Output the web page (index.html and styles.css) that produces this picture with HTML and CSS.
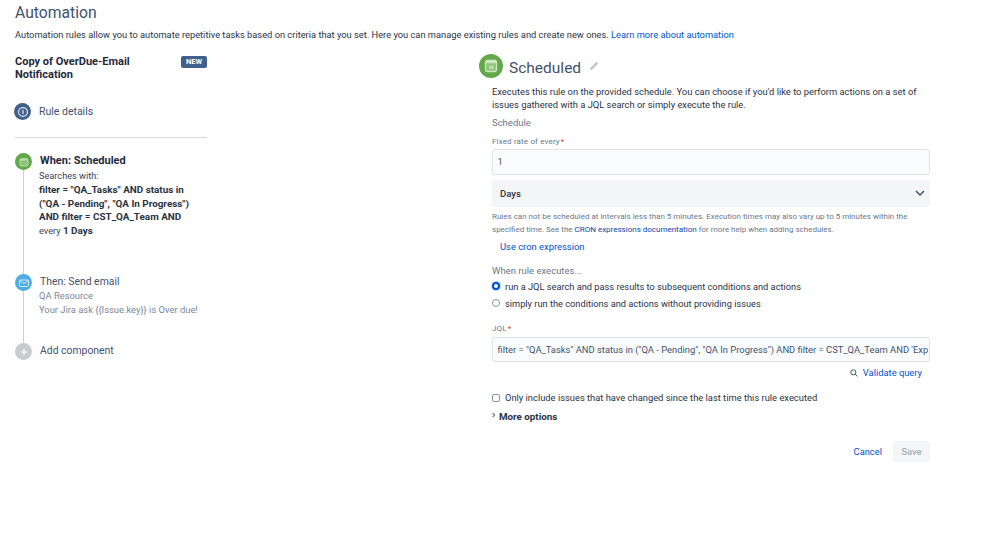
FILE: index.html
```html
<!DOCTYPE html>
<html lang="en">
<head>
<meta charset="utf-8">
<title>Automation</title>
<link rel="stylesheet" href="styles.css">
</head>
<body>
<main class="page">
  <h1 class="page-title">Automation</h1>
  <p class="page-desc">Automation rules allow you to automate repetitive tasks based on criteria that you set. Here you can manage existing rules and create new ones. <a href="#" class="link">Learn more about automation</a></p>
  <div class="columns">
    <aside class="rule">
      <div class="rule-head">
        <h2 class="rule-name">Copy of OverDue-Email Notification</h2>
        <span class="lozenge">NEW</span>
      </div>
      <div class="details">
        <span class="dot dot-navy">
          <svg viewBox="0 0 16 16" width="16" height="16"><circle cx="8" cy="8" r="4.400" fill="none" stroke="#dfe5ee" stroke-width="1.200"/><rect x="7.400" y="5.800" width="1.200" height="4.400" fill="#dfe5ee"/></svg>
        </span>
        <span class="details-label">Rule details</span>
      </div>
      <hr class="divider">
      <ol class="steps">
        <li class="step step-when">
          <span class="dot dot-green">
            <svg viewBox="0 0 16 16" width="16" height="16"><rect x="4" y="4.500" width="8" height="7.500" rx="1.500" fill="#8fc27a" stroke="#b9dbab" stroke-width="1"/><rect x="4.500" y="5" width="7" height="1.500" fill="#b9dbab"/></svg>
          </span>
          <div class="step-body">
            <h3 class="step-title strong">When: Scheduled</h3>
            <p class="step-text">Searches with:<br><b>filter = "QA_Tasks" AND status in<br>("QA - Pending", "QA In Progress")<br>AND filter = CST_QA_Team AND</b><br>every <b>1 Days</b></p>
          </div>
        </li>
        <li class="step step-then">
          <span class="dot dot-blue">
            <svg viewBox="0 0 16 16" width="16" height="16"><rect x="3.500" y="5" width="9" height="6.500" rx="1" fill="none" stroke="#d5ecfa" stroke-width="1"/><path d="M4 5.800 8 8.600l4-2.800" fill="none" stroke="#d5ecfa" stroke-width="1"/></svg>
          </span>
          <div class="step-body">
            <h3 class="step-title">Then: Send email</h3>
            <p class="step-text muted">QA Resource<br>Your Jira ask {{Issue.key}} is Over due!</p>
          </div>
        </li>
        <li class="step step-add">
          <span class="dot dot-grey">
            <svg viewBox="0 0 16 16" width="16" height="16"><path d="M8 5v6M5 8h6" stroke="#f4f5f7" stroke-width="1.600"/></svg>
          </span>
          <div class="step-body">
            <h3 class="step-title">Add component</h3>
          </div>
        </li>
      </ol>
    </aside>
    <section class="config">
      <header class="config-head">
        <span class="dot dot-green dot-large">
          <svg viewBox="0 0 24 24" width="24" height="24"><rect x="6.500" y="6.500" width="11" height="11" rx="2" fill="#8fc27a" stroke="#cfe6c4" stroke-width="1.300"/><rect x="7" y="7" width="10" height="2.200" fill="#cfe6c4"/><rect x="10" y="11.500" width="5" height="3.500" fill="#b9dbab"/></svg>
        </span>
        <h2 class="config-title">Scheduled</h2>
        <svg class="pencil" viewBox="0 0 12 12" width="10" height="10"><path d="M1 11l.7-3L8.300 1.400a1 1 0 0 1 1.400 0l.9.900a1 1 0 0 1 0 1.400L4 10.300z" fill="#c4c7cc"/></svg>
      </header>
      <form class="form">
        <p class="intro">Executes this rule on the provided schedule. You can choose if you'd like to perform actions on a set of issues gathered with a JQL search or simply execute the rule.</p>
        <div class="section-label">Schedule</div>
        <label class="field-label">Fixed rate of every<span class="req">*</span></label>
        <div class="input">1</div>
        <div class="select"><span>Days</span>
          <svg viewBox="0 0 12 12" width="12" height="12"><path d="M2 4l4 4 4-4" fill="none" stroke="#42526e" stroke-width="1.500"/></svg>
        </div>
        <p class="help">Rules can not be scheduled at intervals less than 5 minutes. Execution times may also vary up to 5 minutes within the specified time. See the <a href="#" class="link-dark">CRON expressions documentation</a> for more help when adding schedules.</p>
        <a href="#" class="cron">Use cron expression</a>
        <div class="section-label when">When rule executes...</div>
        <div class="radio-row"><span class="radio radio-on"></span>run a JQL search and pass results to subsequent conditions and actions</div>
        <div class="radio-row"><span class="radio"></span>simply run the conditions and actions without providing issues</div>
        <label class="field-label jql-label">JQL<span class="req">*</span></label>
        <div class="input input-jql"><span class="clip">filter = "QA_Tasks" AND status in ("QA - Pending", "QA In Progress") AND filter = CST_QA_Team AND 'Expected Date' &lt; now()</span></div>
        <div class="validate">
          <svg viewBox="0 0 12 12" width="8" height="8"><circle cx="5" cy="5" r="3.800" fill="none" stroke="#42526e" stroke-width="1.500"/><path d="M8 8l3.200 3.200" stroke="#42526e" stroke-width="1.500"/></svg>
          <a href="#" class="link">Validate query</a>
        </div>
        <div class="check-row"><span class="check"></span>Only include issues that have changed since the last time this rule executed</div>
        <div class="more">
          <svg viewBox="0 0 6 8" width="4" height="6"><path d="M1 1l3 3-3 3" fill="none" stroke="#172b4d" stroke-width="1.400"/></svg>
          <span>More options</span>
        </div>
        <div class="actions">
          <a href="#" class="link cancel">Cancel</a>
          <span class="save">Save</span>
        </div>
      </form>
    </section>
  </div>
</main>
</body>
</html>
```
FILE: styles.css
```css
* { box-sizing: border-box; }
html, body { margin: 0; padding: 0; }
body {
  width: 999px;
  height: 541px;
  overflow: hidden;
  background: #fff;
  color: #172b4d;
  font-family: Roboto, "Noto Sans", sans-serif;
}
a { text-decoration: none; }
h1, h2, h3, p { margin: 0; font-weight: 400; }
ol { list-style: none; margin: 0; padding: 0; }

.page { padding: 3px 0 0 15px; }
.page-title { font-size: 15.700px; line-height: 20px; color: #42526e; }
.page-desc { margin-top: 5px; font-size: 9.300px; line-height: 14px; color: #2a3344; white-space: nowrap; }
.link { color: #0052cc; }
.columns { display: flex; margin-top: 13px; }

.rule { width: 192px; flex: none; }
.rule-head { display: flex; justify-content: space-between; align-items: flex-start; height: 48px; }
.rule-name { width: 130px; font-size: 11px; line-height: 13px; font-weight: 700; color: #1f2a3d; }
.lozenge {
  margin-top: 1px;
  background: #42608c;
  color: #fff;
  font-size: 7.500px;
  font-weight: 700;
  line-height: 12px;
  height: 12px;
  width: 26px;
  text-align: center;
  border-radius: 2px;
}
.dot { display: flex; align-items: center; justify-content: center; width: 17px; height: 17px; border-radius: 50%; flex: none; position: relative; z-index: 1; }
.dot-navy { background: #42608c; }
.dot-green { background: #63a94a; }
.dot-blue { background: #4fade6; }
.dot-grey { background: #c9cbcf; }
.dot-large { width: 24px; height: 24px; }

.details { display: flex; align-items: center; gap: 8px; margin-left: -1px; }
.details-label { font-size: 10.500px; line-height: 17px; color: #42526e; }
.divider { border: 0; border-top: 1px solid #d5d7db; margin: 17px 0 15px; }

.step { display: flex; gap: 8px; position: relative; }
.step-when { height: 121px; }
.step-then { height: 69px; }
.step:not(.step-add)::before {
  content: "";
  position: absolute;
  left: 8px;
  top: 10px;
  bottom: -10px;
  width: 1px;
  background: #cfd1d5;
}
.step-title { font-size: 10.400px; line-height: 16px; color: #42526e; }
.step-title.strong { font-weight: 700; color: #1f2a3d; font-size: 11px; }
.step-text { margin: 0 0 0 -1px; font-size: 9.200px; line-height: 13.800px; color: #3a4456; }
.step-text b { font-size: 9.900px; color: #2a3344; }
.step-text.muted { color: #7a869a; margin-top: -1px; font-size: 9.400px; }

.config { width: 451px; margin-left: 272px; flex: none; margin-top: -1px; }
.config-head { display: flex; align-items: center; height: 24px; }
.config-title { margin: 3px 0 0 6px; font-size: 15.500px; color: #42526e; line-height: 24px; }
.pencil { margin: -1px 0 0 8px; }
.form { margin-left: 13px; width: 438px; margin-top: 7px; font-size: 9.350px; color: #2a3344; }
.intro { font-size: 9.370px; line-height: 13.300px; color: #2a3344; }
.section-label { margin-top: 4px; font-size: 9.500px; line-height: 13px; color: #6b778c; }
.field-label { display: block; margin-top: 7px; font-size: 8px; letter-spacing: 0.150px; line-height: 12px; color: #6b778c; }
.req { color: #de350b; margin-left: 1px; }
.input {
  margin-top: 1px;
  height: 26px;
  border: 1px solid #dfe1e6;
  border-radius: 3px;
  background: #fafbfc;
  display: flex;
  align-items: center;
  padding: 0 4.500px;
  font-size: 9.500px;
  color: #42526e;
}
.select {
  margin-top: 5px;
  height: 27px;
  border-radius: 3px;
  background: #f4f5f7;
  display: flex;
  align-items: center;
  justify-content: space-between;
  padding: 0 4px 0 8px;
  font-size: 9.500px;
  font-weight: 500;
  color: #2a3344;
}
.help { margin-top: 3px; font-size: 8px; line-height: 13.500px; color: #6b778c; }
.link-dark { color: #0747a6; }
.cron { display: block; margin: 3px 0 0 8px; font-size: 9.400px; line-height: 13px; color: #0052cc; }
.section-label.when { margin-top: 11px; }
.radio-row { display: flex; align-items: center; gap: 5px; height: 17px; font-size: 9.250px; color: #2a3344; }
.section-label.when + .radio-row { margin-top: 1px; }
.radio { width: 8px; height: 8px; border-radius: 50%; border: 1px solid #8993a4; background: #fff; flex: none; }
.radio-on { border: 2.500px solid #0052cc; background: #fff; box-shadow: 0 0 0 1px #b3d4ff; }
.jql-label { margin-top: 11px; }
.input-jql { height: 25px; margin-top: 2px; padding-right: 1px; font-size: 9.400px; }
.clip { overflow: hidden; white-space: nowrap; display: block; width: 100%; }
.validate { display: flex; justify-content: flex-end; align-items: center; gap: 5px; margin-top: 4px; padding-right: 8px; line-height: 14px; }
.check-row { display: flex; align-items: center; gap: 5px; margin-top: 11.500px; line-height: 13px; color: #2a3344; }
.check { width: 8px; height: 8px; border: 1px solid #8993a4; border-radius: 2px; flex: none; }
.more { display: flex; align-items: center; gap: 3px; margin-top: 6px; font-size: 9.800px; font-weight: 700; color: #2a3344; line-height: 13px; }
.more svg { margin-top: -3px; }
.actions { display: flex; justify-content: flex-end; align-items: center; gap: 11px; margin-top: 18px; }
.save { width: 37px; height: 21px; border-radius: 3px; background: #f4f5f7; color: #a5adba; display: flex; align-items: center; justify-content: center; font-weight: 500; }
```
